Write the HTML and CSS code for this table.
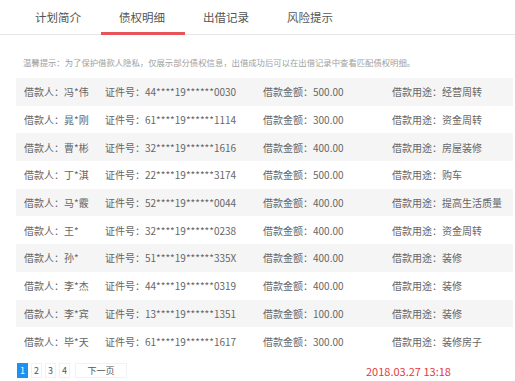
FILE: index.html
```html
<!DOCTYPE html>
<html lang="zh">
<head>
<meta charset="utf-8">
<link rel="stylesheet" href="styles.css">
</head>
<body>
<div class="tabs">
  <div class="tab">计划简介</div>
  <div class="tab active">债权明细</div>
  <div class="tab">出借记录</div>
  <div class="tab">风险提示</div>
</div>
<p class="notice">温馨提示：为了保护借款人隐私，仅展示部分债权信息，出借成功后可以在出借记录中查看匹配债权明细。</p>
<div class="list">
  <div class="row"><span class="c1">借款人：冯*伟</span><span class="c2">证件号：44****19******0030</span><span class="c3">借款金额：500.00</span><span class="c4">借款用途：经营周转</span></div>
  <div class="row"><span class="c1">借款人：晁*刚</span><span class="c2">证件号：61****19******1114</span><span class="c3">借款金额：300.00</span><span class="c4">借款用途：资金周转</span></div>
  <div class="row"><span class="c1">借款人：曹*彬</span><span class="c2">证件号：32****19******1616</span><span class="c3">借款金额：400.00</span><span class="c4">借款用途：房屋装修</span></div>
  <div class="row"><span class="c1">借款人：丁*淇</span><span class="c2">证件号：22****19******3174</span><span class="c3">借款金额：500.00</span><span class="c4">借款用途：购车</span></div>
  <div class="row"><span class="c1">借款人：马*霰</span><span class="c2">证件号：52****19******0044</span><span class="c3">借款金额：400.00</span><span class="c4">借款用途：提高生活质量</span></div>
  <div class="row"><span class="c1">借款人：王*</span><span class="c2">证件号：32****19******0238</span><span class="c3">借款金额：400.00</span><span class="c4">借款用途：资金周转</span></div>
  <div class="row"><span class="c1">借款人：孙*</span><span class="c2">证件号：51****19******335X</span><span class="c3">借款金额：400.00</span><span class="c4">借款用途：装修</span></div>
  <div class="row"><span class="c1">借款人：李*杰</span><span class="c2">证件号：44****19******0319</span><span class="c3">借款金额：400.00</span><span class="c4">借款用途：装修</span></div>
  <div class="row"><span class="c1">借款人：李*宾</span><span class="c2">证件号：13****19******1351</span><span class="c3">借款金额：100.00</span><span class="c4">借款用途：装修</span></div>
  <div class="row"><span class="c1">借款人：毕*天</span><span class="c2">证件号：61****19******1617</span><span class="c3">借款金额：300.00</span><span class="c4">借款用途：装修房子</span></div>
</div>
<div class="footer">
  <div class="pager">
    <span class="page current">1</span>
    <span class="page">2</span>
    <span class="page">3</span>
    <span class="page">4</span>
    <span class="page next">下一页</span>
  </div>
  <div class="date">2018.03.27 13:18</div>
</div>
</body>
</html>
```

FILE: styles.css
```css
html, body {
  margin: 0;
  padding: 0;
  background: #fff;
  font-family: "Noto Sans CJK SC", "Noto Sans", sans-serif;
  color: #666;
}

.tabs {
  display: flex;
  height: 34px;
  padding-left: 16px;
  border-bottom: 1px solid #e6e6e6;
}

.tab {
  position: relative;
  width: 84px;
  text-align: center;
  line-height: 34px;
  font-size: 11.5px;
  color: #555;
}

.tab.active::after {
  content: "";
  position: absolute;
  left: 1px;
  right: -1px;
  bottom: -1px;
  height: 3px;
  background: #e9545a;
}

.notice {
  margin: 0;
  padding: 21px 0 0 23px;
  height: 22px;
  line-height: 12px;
  font-size: 8.35px;
  color: #a0a0a0;
}

.list {
  margin: 0 2px 0 16px;
}

.row {
  display: flex;
  height: 27.7px;
  align-items: center;
  font-size: 10px;
  color: #666;
}

.row:nth-child(odd) {
  background: #f5f5f5;
}

.c1 { width: 81px; padding-left: 8px; }
.c2 { width: 158px; }
.c3 { width: 129px; }
.c4 { flex: 1; }

.footer {
  display: flex;
  align-items: center;
  padding: 8px 0 0 17px;
}

.pager {
  display: flex;
  gap: 3px;
  width: 349px;
}

.page {
  box-sizing: border-box;
  height: 15px;
  width: 11px;
  line-height: 13px;
  text-align: center;
  font-size: 9px;
  color: #555;
  border: 1px solid #f2f2f2;
}

.page.current {
  background: #1e90f0;
  border-color: #1e90f0;
  color: #fff;
}

.page.next {
  width: 52px;
  margin-left: 2px;
}

.date {
  font-size: 11px;
  color: #e4393c;
}
```
